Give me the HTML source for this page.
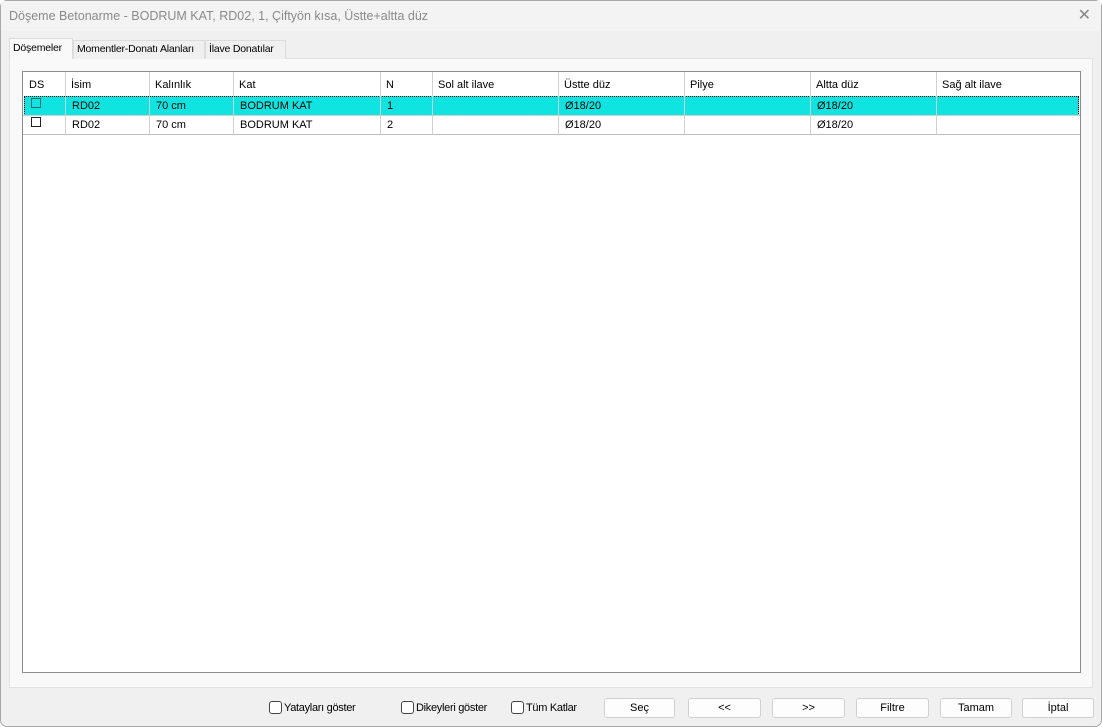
<!DOCTYPE html>
<html><head><meta charset="utf-8"><style>
*{margin:0;padding:0;box-sizing:border-box}
body{width:1102px;height:727px;background:#fff;font-family:"Liberation Sans",sans-serif;font-size:12px;color:#000;position:relative;overflow:hidden}
.win{position:absolute;left:0;top:0;width:1102px;height:727px;background:#f0f0f0;box-shadow:inset 0 0 0 1px #a8a8a8;border-radius:7px;overflow:hidden}
.title{position:absolute;left:1px;top:1px;width:1100px;height:30px;background:#f3f3f3;color:#8a8a8a;font-size:12.5px;line-height:30px;padding-left:8px;white-space:nowrap}
.x{position:absolute;right:11px;top:5px;font-size:16px;color:#888}
.a{position:absolute}
.panel{left:9px;top:58px;width:1084px;height:630px;background:#f9f9f9;border:1px solid #e2e2e2}
.tab{top:40px;height:19px;font-size:10.5px;line-height:17px;border:1px solid #dcdcdc;border-bottom:none;background:#f0f0f0;padding-left:3px;white-space:nowrap;overflow:hidden;letter-spacing:-0.2px}
.grid{left:22px;top:71px;width:1059px;height:602px;background:#fff;border:1px solid #8c8c8c}
.c{position:absolute;font-size:11px;line-height:19px;white-space:nowrap}
.vl{position:absolute;width:1px;background:#d0d0d0}
.hl{position:absolute;height:1px;background:#d0d0d0}
.cb{position:absolute;width:10px;height:10px;border:1px solid #222}
.btn{position:absolute;top:698px;height:20px;background:#fdfdfd;border:1px solid #d0d0d0;border-radius:3px;text-align:center;font-size:11px;line-height:18px}
.ck{position:absolute;top:701px;width:13px;height:13px;border:1px solid #444;border-radius:3px;background:#fff}
.lb{position:absolute;top:701px;font-size:11px;line-height:14px;white-space:nowrap;letter-spacing:-0.3px}
</style></head><body>
<div class="win">
<div class="title">Döşeme Betonarme - BODRUM KAT, RD02, 1, Çiftyön kısa, Üstte+altta düz</div>
<div class="x">✕</div>
<div class="a panel"></div>
<div class="a tab" style="left:9px;top:38px;width:64px;height:21px;background:#f9f9f9;border-color:#dcdcdc;line-height:19px">Döşemeler</div>
<div class="a tab" style="left:73px;width:132px">Momentler-Donatı Alanları</div>
<div class="a tab" style="left:205px;width:81px">İlave Donatılar</div>
<div class="a grid">
<div style="position:absolute;left:1px;top:24px;width:1055px;height:20px;background:#0fe4e0;border:1px dotted #000"></div>
<div class="hl" style="left:0;top:43px;width:1057px"></div>
<div class="hl" style="left:0;top:62px;width:1057px;background:#bdbdbd"></div>
<div class="vl" style="left:42px;top:0;height:63px"></div>
<div class="vl" style="left:126px;top:0;height:63px"></div>
<div class="vl" style="left:210px;top:0;height:63px"></div>
<div class="vl" style="left:357px;top:0;height:63px"></div>
<div class="vl" style="left:409px;top:0;height:63px"></div>
<div class="vl" style="left:535px;top:0;height:63px"></div>
<div class="vl" style="left:661px;top:0;height:63px"></div>
<div class="vl" style="left:787px;top:0;height:63px"></div>
<div class="vl" style="left:913px;top:0;height:63px"></div>
<div class="c" style="left:6px;top:4px">DS</div>
<div class="c" style="left:48px;top:4px">İsim</div>
<div class="c" style="left:132px;top:4px">Kalınlık</div>
<div class="c" style="left:216px;top:4px">Kat</div>
<div class="c" style="left:363px;top:4px">N</div>
<div class="c" style="left:415px;top:4px">Sol alt ilave</div>
<div class="c" style="left:541px;top:4px">Üstte düz</div>
<div class="c" style="left:667px;top:4px">Pilye</div>
<div class="c" style="left:793px;top:4px">Altta düz</div>
<div class="c" style="left:919px;top:4px">Sağ alt ilave</div>
<div class="cb" style="left:8px;top:26px;border-color:#1a6a6a"></div>
<div class="c" style="left:49px;top:25px">RD02</div>
<div class="c" style="left:133px;top:25px">70 cm</div>
<div class="c" style="left:217px;top:25px">BODRUM KAT</div>
<div class="c" style="left:364px;top:25px">1</div>
<div class="c" style="left:542px;top:25px">Ø18/20</div>
<div class="c" style="left:794px;top:25px">Ø18/20</div>
<div class="cb" style="left:8px;top:45px"></div>
<div class="c" style="left:49px;top:44px">RD02</div>
<div class="c" style="left:133px;top:44px">70 cm</div>
<div class="c" style="left:217px;top:44px">BODRUM KAT</div>
<div class="c" style="left:364px;top:44px">2</div>
<div class="c" style="left:542px;top:44px">Ø18/20</div>
<div class="c" style="left:794px;top:44px">Ø18/20</div>
</div>
<div class="ck" style="left:269px"></div><div class="lb" style="left:284px">Yatayları göster</div>
<div class="ck" style="left:401px"></div><div class="lb" style="left:416px">Dikeyleri göster</div>
<div class="ck" style="left:511px"></div><div class="lb" style="left:526px">Tüm Katlar</div>
<div class="btn" style="left:604px;width:71px">Seç</div>
<div class="btn" style="left:688px;width:73px">&lt;&lt;</div>
<div class="btn" style="left:772px;width:73px">&gt;&gt;</div>
<div class="btn" style="left:856px;width:73px">Filtre</div>
<div class="btn" style="left:940px;width:72px">Tamam</div>
<div class="btn" style="left:1022px;width:72px">İptal</div>
</div>
</body></html>
